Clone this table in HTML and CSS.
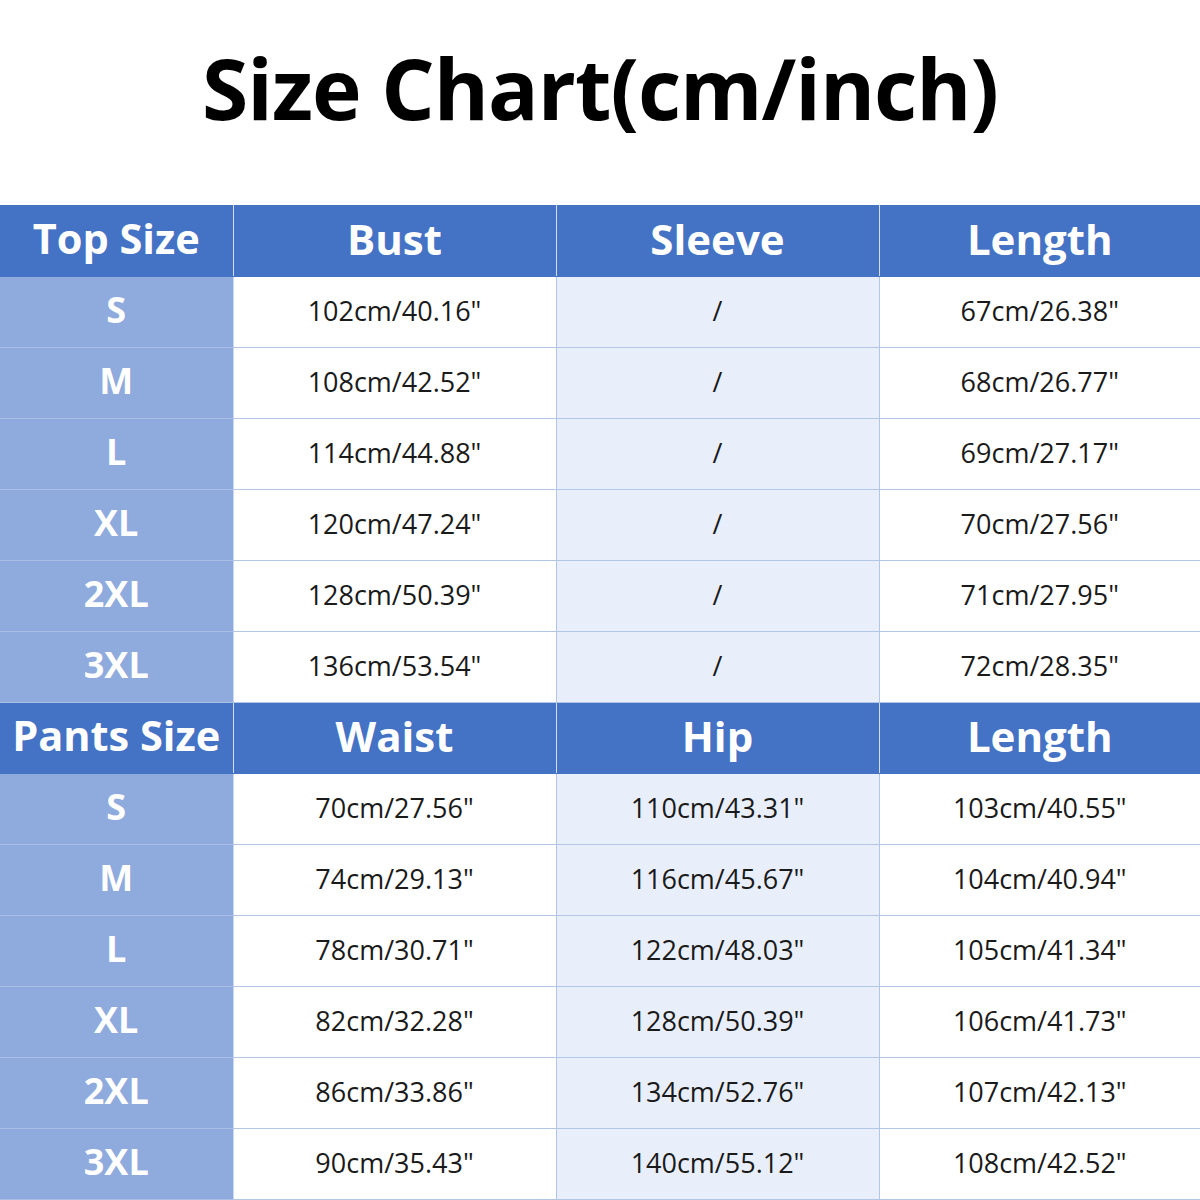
FILE: index.html
```html
<!DOCTYPE html>
<html>
<head>
<meta charset="utf-8">
<link rel="stylesheet" href="styles.css">
</head>
<body>
<div class="page">
  <h1 class="title">Size Chart(cm/inch)</h1>
  <table class="chart">
    <colgroup>
      <col class="c1"><col class="c2"><col class="c3"><col class="c4">
    </colgroup>
    <tr class="head"><th>Top Size</th><th>Bust</th><th>Sleeve</th><th>Length</th></tr>
    <tr><td class="size">S</td><td>102cm/40.16"</td><td class="alt">/</td><td>67cm/26.38"</td></tr>
    <tr><td class="size">M</td><td>108cm/42.52"</td><td class="alt">/</td><td>68cm/26.77"</td></tr>
    <tr><td class="size">L</td><td>114cm/44.88"</td><td class="alt">/</td><td>69cm/27.17"</td></tr>
    <tr><td class="size">XL</td><td>120cm/47.24"</td><td class="alt">/</td><td>70cm/27.56"</td></tr>
    <tr><td class="size">2XL</td><td>128cm/50.39"</td><td class="alt">/</td><td>71cm/27.95"</td></tr>
    <tr><td class="size">3XL</td><td>136cm/53.54"</td><td class="alt">/</td><td>72cm/28.35"</td></tr>
    <tr class="head"><th>Pants Size</th><th>Waist</th><th>Hip</th><th>Length</th></tr>
    <tr><td class="size">S</td><td>70cm/27.56"</td><td class="alt">110cm/43.31"</td><td>103cm/40.55"</td></tr>
    <tr><td class="size">M</td><td>74cm/29.13"</td><td class="alt">116cm/45.67"</td><td>104cm/40.94"</td></tr>
    <tr><td class="size">L</td><td>78cm/30.71"</td><td class="alt">122cm/48.03"</td><td>105cm/41.34"</td></tr>
    <tr><td class="size">XL</td><td>82cm/32.28"</td><td class="alt">128cm/50.39"</td><td>106cm/41.73"</td></tr>
    <tr><td class="size">2XL</td><td>86cm/33.86"</td><td class="alt">134cm/52.76"</td><td>107cm/42.13"</td></tr>
    <tr><td class="size">3XL</td><td>90cm/35.43"</td><td class="alt">140cm/55.12"</td><td>108cm/42.52"</td></tr>
  </table>
</div>
</body>
</html>
```
FILE: styles.css
```css
html, body {
  margin: 0;
  padding: 0;
  background: #ffffff;
}
.page {
  width: 1200px;
  height: 1200px;
  overflow: hidden;
  font-family: "Open Sans", "Noto Sans", sans-serif;
}
.title {
  margin: 0;
  height: 205px;
  box-sizing: border-box;
  padding-top: 33px;
  text-align: center;
  font-size: 84px;
  font-weight: 700;
  line-height: 110px;
  color: #000;
  letter-spacing: -1px;
}
.chart {
  width: 1200px;
  border-collapse: collapse;
  table-layout: fixed;
}
.c1 { width: 233px; }
.c2 { width: 323px; }
.c3 { width: 323px; }
.c4 { width: 321px; }
.chart tr { height: 71px; }
.chart th, .chart td {
  padding: 0 0 4px 0;
  text-align: center;
  vertical-align: middle;
  border: 1px solid #b4c6e7;
  line-height: 1;
}
.chart tr > *:first-child { border-left: none; }
.chart tr > *:last-child { border-right: none; }
.chart tr.head { height: 71px; }
.chart th {
  background: #4472c4;
  color: #fff;
  font-size: 42px;
  font-weight: 700;
  border-color: #d0dcf0;
  border-top-color: #4472c4;
  border-bottom-color: #4472c4;
}
.chart th:first-child { font-size: 41.5px; }
.chart td {
  font-size: 27px;
  color: #1a1a1a;
  background: #fff;
}
.chart td.alt { background: #e9effa; }
.chart td.size {
  background: #8faadc;
  color: #fff;
  font-size: 36px;
  font-weight: 700;
  border-color: #a9bfe6;
  border-right-color: #c9d7ef;
}
```
